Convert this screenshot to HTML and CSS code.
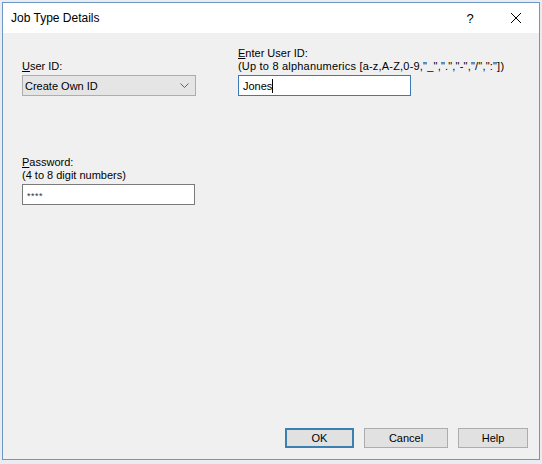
FILE: index.html
```html
<!DOCTYPE html>
<html>
<head>
    <title>Job Type Details</title>
    <meta charset="utf-8">
    <link rel="stylesheet" href="styles.css">
</head>
<body>
    <div class="dialog">
        <div class="titlebar">
            <span class="title">Job Type Details</span>
            <span class="help-btn">?</span>
            <span class="close-btn">
                <svg width="12" height="12" viewBox="0 0 12 12">
                    <path d="M1 1 L11 11 M11 1 L1 11" stroke="#000" stroke-width="1" fill="none"/>
                </svg>
            </span>
        </div>

        <div class="body">
            <div class="row">
                <div class="field left">
                    <div class="label"><u>U</u>ser ID:</div>
                    <div class="combo">
                        <span>Create Own ID</span>
                        <svg width="9" height="6" viewBox="0 0 9 6">
                            <polyline points="0.5,0.5 4.5,4.5 8.5,0.5" stroke="#606060" stroke-width="1" fill="none"/>
                        </svg>
                    </div>
                </div>
                <div class="field right">
                    <div class="label"><u>E</u>nter User ID:</div>
                    <div class="label note">(Up to 8 alphanumerics [a-z,A-Z,0-9,"_",".","-","/",":"])</div>
                    <div class="textbox focused"><span class="caret">Jones</span></div>
                </div>
            </div>

            <div class="field password">
                <div class="label"><u>P</u>assword:</div>
                <div class="label">(4 to 8 digit numbers)</div>
                <div class="textbox"><span class="stars">****</span></div>
            </div>

            <div class="buttons">
                <button class="default">OK</button>
                <button class="cancel">Cancel</button>
                <button class="help">Help</button>
            </div>
        </div>
    </div>
</body>
</html>
```

FILE: styles.css
```css
* {
    box-sizing: border-box;
}

body {
    margin: 0;
    background-color: #e9edf1;
    font-family: "Liberation Sans", Arial, sans-serif;
    font-size: 11px;
    color: #000;
}

.dialog {
    margin: 2px 0 0 2px;
    width: 538px;
    height: 458px;
    border: 1px solid #6d98c4;
    background-color: #f0f0f0;
    display: flex;
    flex-direction: column;
}

/* Window title bar */
.titlebar {
    height: 30px;
    background-color: #fff;
    display: flex;
    align-items: center;
    font-size: 12px;
}

.title {
    margin-left: 8px;
    flex: 1;
}

.help-btn {
    width: 46px;
    text-align: center;
    font-size: 13px;
}

.close-btn {
    width: 46px;
    display: flex;
    justify-content: center;
}

.body {
    flex: 1;
    display: flex;
    flex-direction: column;
    padding: 14px 11px 11px 19px;
}

.row {
    display: flex;
    align-items: flex-end;
}

.field.left {
    width: 216px;
}

.label {
    line-height: 13px;
    white-space: nowrap;
}

.label.note {
    letter-spacing: 0.2px;
}

.combo {
    margin-top: 2px;
    width: 174px;
    height: 21px;
    border: 1px solid #adadad;
    background-color: #e5e5e5;
    display: flex;
    align-items: center;
    justify-content: space-between;
    padding: 0 6px 0 2px;
}

.textbox {
    margin-top: 2px;
    width: 173px;
    height: 21px;
    border: 1px solid #7a7a7a;
    background-color: #fff;
    display: flex;
    align-items: center;
    padding-left: 4px;
}

.textbox.focused {
    border-color: #3d7ab3;
}

.caret {
    border-right: 1px solid #000;
    line-height: 14px;
}

.stars {
    font-size: 9px;
    color: #333;
    letter-spacing: 0.5px;
    padding-top: 2px;
}

.field.password {
    margin-top: 60px;
}

.buttons {
    margin-top: auto;
    display: flex;
    justify-content: flex-end;
    gap: 10px;
}

.buttons button {
    height: 20px;
    border: 1px solid #adadad;
    background-color: #e1e1e1;
    font-family: "Liberation Sans", Arial, sans-serif;
    font-size: 11px;
    padding: 0;
}

.buttons .default {
    width: 69px;
    border: 2px solid #3c7fb1;
}

.buttons .cancel {
    width: 84px;
}

.buttons .help {
    width: 70px;
}
```
